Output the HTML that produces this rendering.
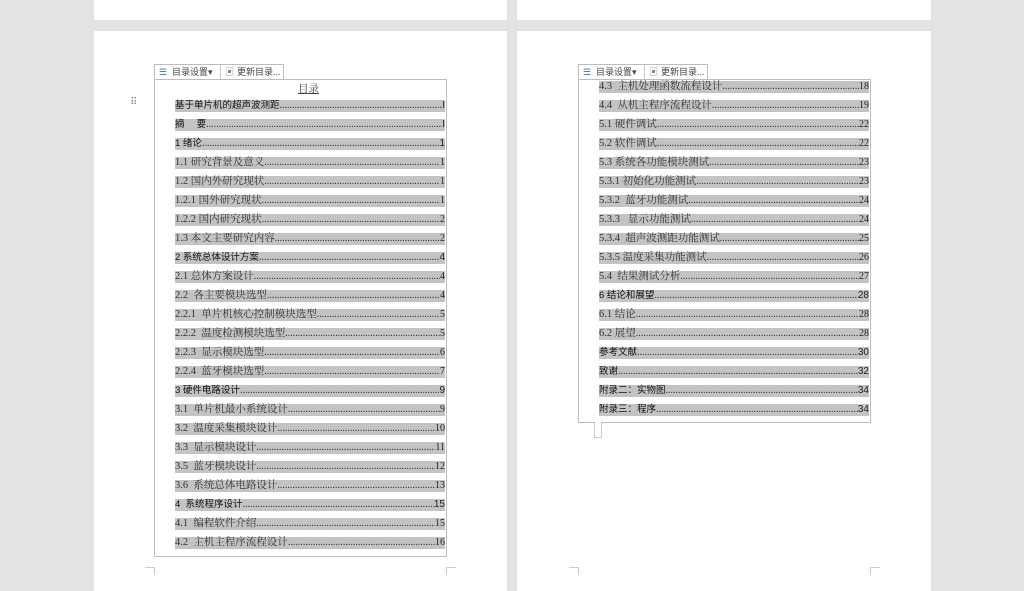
<!DOCTYPE html>
<html><head><meta charset="utf-8"><style>
*{margin:0;padding:0;box-sizing:border-box}
body{width:1024px;height:575px;background:#e3e3e3;position:relative;overflow:hidden;font-family:"Liberation Serif","Noto Serif CJK SC",serif}
.pg{position:absolute;background:#fff}
.box{position:absolute;border:1px solid #bdbdbd;background:#fff}
.tb{position:absolute;height:16px;border:1px solid #bdbdbd;background:#fff;font-family:"Liberation Sans","Noto Sans CJK SC",sans-serif;font-size:9px;color:#444;line-height:14px;white-space:nowrap}
.tb span{position:absolute;top:0}
.row{position:absolute;height:12px;background:#c3c3c3;display:flex;font-size:10.5px;line-height:12px;color:#333;white-space:nowrap}
.row.b{color:#111;font-family:"Liberation Sans","Noto Sans CJK SC",sans-serif;font-size:9.5px}
.row .d{flex:1;overflow:hidden;color:#333;font-family:"Liberation Serif",serif;font-size:10px}
.row .d::after{content:"..............................................................................................................................................................................."}
.row .n{color:#222;font-size:10px}
.mk{position:absolute;width:10px;height:8px;border-color:#ccc;border-style:solid;border-width:0}
</style></head><body>
<div class="pg" style="left:94px;top:0;width:413px;height:20px"></div>
<div class="pg" style="left:517px;top:0;width:414px;height:20px"></div>
<div class="pg" style="left:94px;top:31px;width:413px;height:560px"></div>
<div class="pg" style="left:517px;top:31px;width:414px;height:560px"></div>

<div class="box" style="left:154px;top:79px;width:293px;height:478px"></div>
<div class="tb" style="left:154px;top:64px;width:130px"><span style="left:4px;color:#3a6fb5">☰</span><span style="left:17px">目录设置▾</span><span style="left:65px;border-left:1px solid #ccc;height:14px"></span><span style="left:70px;color:#888">▣</span><span style="left:82px">更新目录...</span></div>
<div style="position:absolute;left:298px;top:81px;font-size:10.5px;color:#444;text-decoration:underline">目录</div>
<div style="position:absolute;left:130px;top:101px;font-size:10px;color:#888;line-height:4px;letter-spacing:-1px">⠿</div>

<div class="box" style="left:578px;top:79px;width:293px;height:344px"></div>
<div style="position:absolute;left:594px;top:422px;width:8px;height:16px;border:1px solid #ccc;border-top:none;background:#fff"></div>
<div class="tb" style="left:578px;top:64px;width:130px"><span style="left:4px;color:#3a6fb5">☰</span><span style="left:17px">目录设置▾</span><span style="left:65px;border-left:1px solid #ccc;height:14px"></span><span style="left:70px;color:#888">▣</span><span style="left:82px">更新目录...</span></div>

<div class="mk" style="left:145px;top:567px;border-top-width:1px;border-right-width:1px"></div>
<div class="mk" style="left:446px;top:567px;border-top-width:1px;border-left-width:1px"></div>
<div class="mk" style="left:569px;top:567px;border-top-width:1px;border-right-width:1px"></div>
<div class="mk" style="left:870px;top:567px;border-top-width:1px;border-left-width:1px"></div>

<div id="L"></div><div id="R"></div>
<script>
var L=[["基于单片机的超声波测距","I",1],["摘　 要","I",1],["1 绪论","1",1],["1.1 研究背景及意义","1"],["1.2 国内外研究现状","1"],["1.2.1 国外研究现状","1"],["1.2.2 国内研究现状","2"],["1.3 本文主要研究内容","2"],["2 系统总体设计方案","4",1],["2.1 总体方案设计","4"],["2.2  各主要模块选型","4"],["2.2.1  单片机核心控制模块选型","5"],["2.2.2  温度检测模块选型","5"],["2.2.3  显示模块选型","6"],["2.2.4  蓝牙模块选型","7"],["3 硬件电路设计","9",1],["3.1  单片机最小系统设计","9"],["3.2  温度采集模块设计","10"],["3.3  显示模块设计","11"],["3.5  蓝牙模块设计","12"],["3.6  系统总体电路设计","13"],["4  系统程序设计","15",1],["4.1  编程软件介绍","15"],["4.2  主机主程序流程设计","16"]];
var R=[["4.3  主机处理函数流程设计","18"],["4.4  从机主程序流程设计","19"],["5.1 硬件调试","22"],["5.2 软件调试","22"],["5.3 系统各功能模块测试","23"],["5.3.1 初始化功能测试","23"],["5.3.2  蓝牙功能测试","24"],["5.3.3   显示功能测试","24"],["5.3.4  超声波测距功能测试","25"],["5.3.5 温度采集功能测试","26"],["5.4  结果测试分析","27"],["6 结论和展望","28",1],["6.1 结论","28"],["6.2 展望","28"],["参考文献","30",1],["致谢","32",1],["附录二：实物图","34",1],["附录三：程序","34",1]];
function put(a,x,y0){var h="";a.forEach(function(r,i){h+='<div class="row'+(r[2]?' b':'')+'" style="left:'+x+'px;top:'+(y0+i*19-6)+'px;width:270px"><span>'+r[0].replace(/ /g,'&nbsp;')+'</span><span class="d"></span><span class="n">'+r[1]+'</span></div>';});return h;}
document.getElementById('L').innerHTML=put(L,175,106);
document.getElementById('R').innerHTML=put(R,599,87);
</script>
</body></html>
